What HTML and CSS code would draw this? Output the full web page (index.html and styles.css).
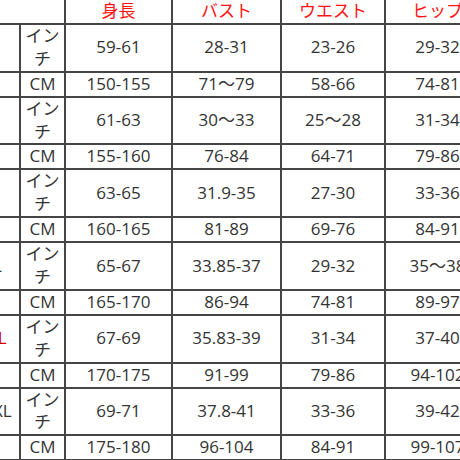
FILE: index.html
```html
<!DOCTYPE html>
<html lang="ja">
<head>
<meta charset="utf-8">
<title>サイズ表</title>
<link rel="stylesheet" href="styles.css">
</head>
<body>
<table class="size-table">
  <colgroup>
    <col class="c-size"><col class="c-unit"><col class="c-h"><col class="c-b"><col class="c-w"><col class="c-hip">
  </colgroup>
  <thead>
    <tr>
      <th colspan="2" class="corner"></th>
      <th>身長</th><th>バスト</th><th>ウエスト</th><th>ヒップ</th>
    </tr>
  </thead>
  <tbody>
    <tr class="inch"><td class="size">S</td><td class="unit">インチ</td><td>59-61</td><td>28-31</td><td>23-26</td><td>29-32</td></tr>
    <tr class="cm"><td class="size"></td><td class="unit">CM</td><td>150-155</td><td>71〜79</td><td>58-66</td><td>74-81</td></tr>
    <tr class="inch"><td class="size">M</td><td class="unit">インチ</td><td>61-63</td><td>30〜33</td><td>25〜28</td><td>31-34</td></tr>
    <tr class="cm"><td class="size"></td><td class="unit">CM</td><td>155-160</td><td>76-84</td><td>64-71</td><td>79-86</td></tr>
    <tr class="inch"><td class="size">L</td><td class="unit">インチ</td><td>63-65</td><td>31.9-35</td><td>27-30</td><td>33-36</td></tr>
    <tr class="cm"><td class="size"></td><td class="unit">CM</td><td>160-165</td><td>81-89</td><td>69-76</td><td>84-91</td></tr>
    <tr class="inch"><td class="size">XL</td><td class="unit">インチ</td><td>65-67</td><td>33.85-37</td><td>29-32</td><td>35〜38</td></tr>
    <tr class="cm"><td class="size"></td><td class="unit">CM</td><td>165-170</td><td>86-94</td><td>74-81</td><td>89-97</td></tr>
    <tr class="inch"><td class="size red">XXL</td><td class="unit">インチ</td><td>67-69</td><td>35.83-39</td><td>31-34</td><td>37-40</td></tr>
    <tr class="cm"><td class="size"></td><td class="unit">CM</td><td>170-175</td><td>91-99</td><td>79-86</td><td>94-102</td></tr>
    <tr class="inch"><td class="size">XXXL</td><td class="unit">インチ</td><td>69-71</td><td>37.8-41</td><td>33-36</td><td>39-42</td></tr>
    <tr class="cm"><td class="size"></td><td class="unit">CM</td><td>175-180</td><td>96-104</td><td>84-91</td><td>99-107</td></tr>
  </tbody>
</table>
</body>
</html>
```

FILE: styles.css
```css
html, body {
  margin: 0;
  padding: 0;
  overflow: hidden;
  background: #ffffff;
}

body {
  width: 460px;
  height: 460px;
}

.size-table {
  margin-left: -34px;
  border-collapse: separate;
  border-spacing: 0;
  table-layout: fixed;
  width: 525px;
  font-family: "Open Sans", "Noto Sans CJK JP", sans-serif;
  font-size: 17px;
  line-height: 22.9px;
  color: #333333;
}

.c-size { width: 55px; }
.c-unit { width: 45px; }
.c-h { width: 107px; }
.c-b { width: 109px; }
.c-w { width: 104px; }
.c-hip { width: 105px; }

.size-table th,
.size-table td {
  padding: 0;
  border-right: 2px solid #454545;
  border-bottom: 2px solid #454545;
  text-align: center;
  vertical-align: middle;
  white-space: normal;
}

.size-table th {
  font-weight: normal;
  color: #ff1414;
}

.size-table td.size {
  white-space: nowrap;
  overflow: hidden;
  text-overflow: clip;
}

.size-table td.red {
  color: #cc0000;
}

.size-table td.unit {
  word-break: break-all;
}
```
